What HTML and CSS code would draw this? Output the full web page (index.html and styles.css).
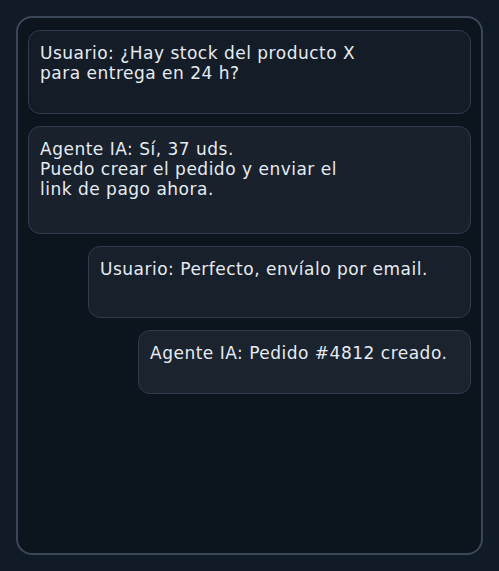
FILE: index.html
```html
<!DOCTYPE html>
<html lang="es">
<head>
  <meta charset="UTF-8">
  <title>Chat - Agente IA</title>
  <link rel="stylesheet" href="styles.css">
</head>
<body>

  <div class="chat-panel">
    <div class="msg msg-user msg-first">Usuario: ¿Hay stock del producto X<br>para entrega en 24 h?</div>
    <div class="msg msg-agent msg-second">Agente IA: Sí, 37 uds.<br>Puedo crear el pedido y enviar el<br>link de pago ahora.</div>
    <div class="msg msg-user msg-third">Usuario: Perfecto, envíalo por email.</div>
    <div class="msg msg-agent msg-fourth">Agente IA: Pedido #4812 creado.</div>
  </div>

</body>
</html>
```

FILE: styles.css
```css
html, body {
  margin: 0;
  background-color: #111b27;
}
body {
  font-family: "DejaVu Sans", sans-serif;
  font-size: 17px;
  letter-spacing: 0.5px;
  color: #e6ebf1;
  padding: 16px;
  height: 571px;
  box-sizing: border-box;
}
.chat-panel {
  height: 539px;
  box-sizing: border-box;
  background-color: #0c151e;
  border: 2px solid #3a4859;
  border-radius: 16px;
  padding: 12px 10px;
  display: flex;
  flex-direction: column;
  gap: 12px;
}
.msg {
  box-sizing: border-box;
  border: 1px solid #2f3c4c;
  border-radius: 12px;
  padding: 12px 11px;
  line-height: 20px;
}
.msg-user {
  background-color: #141d27;
}
.msg-agent {
  background-color: #18212c;
}
.msg-first {
  height: 84px;
}
.msg-second {
  height: 108px;
}
.msg-third {
  height: 72px;
  margin-left: 60px;
  background-color: #17202b;
}
.msg-fourth {
  height: 64px;
  margin-left: 110px;
  background-color: #1a232e;
}
```
